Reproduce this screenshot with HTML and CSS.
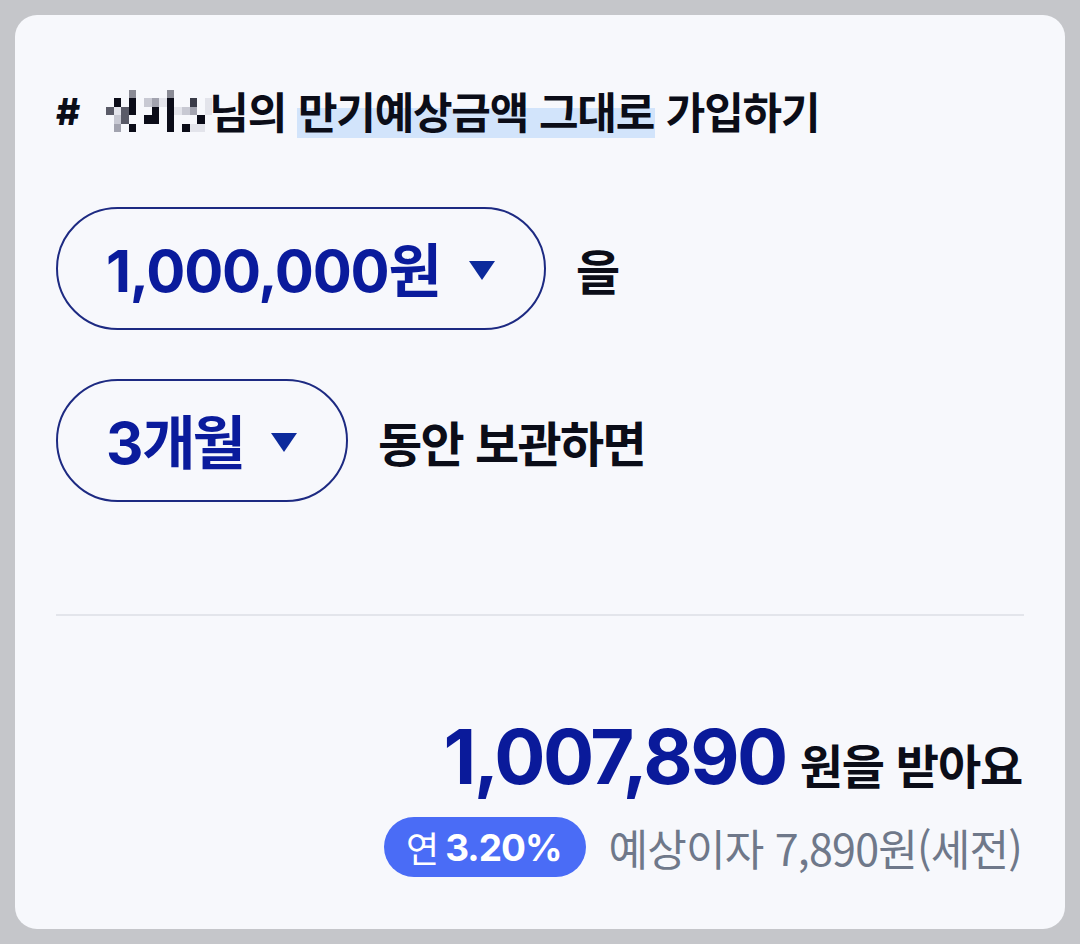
FILE: index.html
```html
<!DOCTYPE html>
<html lang="ko">
<head>
<meta charset="utf-8">
<link rel="stylesheet" href="styles.css">
</head>
<body>
<div class="card">
  <div class="headline">
    <span class="hash">#</span>
    <span class="mosaic" aria-hidden="true">
      <i></i><i></i><i></i><i class="g3"></i><i></i><i></i><i></i><i></i><i class="g3"></i><i></i><i></i><i></i><i></i><i></i>
      <i></i><i class="d"></i><i></i><i class="d"></i><i></i><i class="l1"></i><i class="g2"></i><i class="l2"></i><i class="d"></i><i></i><i></i><i class="d2"></i><i></i><i class="l2"></i>
      <i class="g4"></i><i class="l2"></i><i class="g4"></i><i class="d"></i><i></i><i></i><i class="d"></i><i></i><i class="d"></i><i class="l2"></i><i class="l1"></i><i class="g2"></i><i></i><i class="l2"></i>
      <i></i><i class="l1"></i><i class="g4"></i><i></i><i></i><i class="d"></i><i class="d"></i><i></i><i class="d"></i><i></i><i></i><i></i><i class="d"></i><i></i>
      <i></i><i class="g2"></i><i></i><i class="d"></i><i></i><i></i><i></i><i></i><i class="d"></i><i></i><i class="d"></i><i class="l2"></i><i class="l2"></i><i></i>
    </span>
    <span class="ht">님의 <mark class="hl">만기예상금액 그대로</mark> 가입하기</span>
  </div>

  <div class="row row-first">
    <button class="pill" type="button">
      <span class="pill-text"><span class="num">1,000,000</span>원</span>
      <span class="tri"></span>
    </button>
    <span class="after">을</span>
  </div>

  <div class="row">
    <button class="pill" type="button">
      <span class="pill-text"><span class="num">3</span><span class="kr">개월</span></span>
      <span class="tri"></span>
    </button>
    <span class="after">동안 보관하면</span>
  </div>

  <hr class="divider">

  <div class="result">
    <div class="total"><span class="big">1,007,890</span><span class="suffix">원을 받아요</span></div>
    <div class="sub">
      <span class="badge"><span class="yr">연</span><span class="rate">3.20%</span></span>
      <span class="interest">예상이자 7,890원(세전)</span>
    </div>
  </div>
</div>
</body>
</html>
```

FILE: styles.css
```css
* { box-sizing: border-box; }

html, body {
  margin: 0;
  padding: 0;
  background: #c5c6ca;
}

body {
  width: 1080px;
  height: 944px;
  padding: 15px;
  font-family: "Noto Sans CJK KR", "Noto Sans", sans-serif;
  color: #0b0d18;
}

.card {
  width: 1050px;
  height: 914px;
  background: #f7f8fc;
  border-radius: 22px;
  padding: 0 41px;
  display: flex;
  flex-direction: column;
}

.headline {
  margin-top: 60px;
  height: 70px;
  display: flex;
  align-items: center;
  font-size: 43px;
  font-weight: 700;
  letter-spacing: -1.2px;
}

.hash {
  font-family: "Inter", "Noto Sans", sans-serif;
  font-size: 37px;
  font-weight: 800;
  margin-right: 27px;
  margin-top: 2px;
}

.mosaic {
  display: grid;
  grid-template-columns: repeat(14, 7.6px);
  grid-template-rows: repeat(5, 8.4px);
  margin-top: 2px;
  margin-right: -3px;
}

.mosaic i { display: block; }
.mosaic i.d { background: #0b0c18; }
.mosaic i.d2 { background: #3a3b48; }
.mosaic i.g2 { background: #a2a3af; }
.mosaic i.g3 { background: #8a8b95; }
.mosaic i.g4 { background: #5a5b68; }
.mosaic i.l1 { background: #c8c9d3; }
.mosaic i.l2 { background: #e3e4eb; }

.ht { white-space: nowrap; }

.hl {
  color: inherit;
  background: linear-gradient(to bottom, transparent 47%, #d2e4fb 47%, #d2e4fb 95%, transparent 95%);
  padding: 0 1px;
}

.row {
  display: flex;
  align-items: center;
  margin-top: 49px;
}

.row-first { margin-top: 62px; }

.pill {
  height: 123px;
  border: 2px solid #1d2a82;
  border-radius: 62px;
  background: transparent;
  display: flex;
  align-items: center;
  padding: 0 49px 0 48px;
  font: inherit;
  cursor: pointer;
}

.pill-text {
  color: #0a1b9c;
  font-size: 58px;
  font-weight: 700;
  letter-spacing: -1px;
  line-height: 1;
}

.pill-text .num {
  font-family: "Inter", "Noto Sans", sans-serif;
  letter-spacing: -1.2px;
}

.pill-text .kr {
  letter-spacing: -3px;
}

.tri {
  width: 0;
  height: 0;
  margin-left: 28px;
  border-left: 13px solid transparent;
  border-right: 13px solid transparent;
  border-top: 19px solid #0c2a9c;
  margin-top: 4px;
}

.after {
  margin-left: 30px;
  font-size: 48px;
  font-weight: 700;
  letter-spacing: -1.6px;
  color: #0b0d18;
}

.divider {
  border: 0;
  height: 2px;
  background: #e3e5eb;
  margin: 112px 0 0;
  width: 100%;
}

.result {
  margin-top: 102px;
  display: flex;
  flex-direction: column;
  align-items: flex-end;
  padding-right: 2px;
}

.total {
  display: flex;
  align-items: baseline;
  line-height: 1;
}

.big {
  font-family: "Inter", "Noto Sans", sans-serif;
  font-size: 76px;
  font-weight: 700;
  letter-spacing: -2.5px;
  color: #0a1a9a;
}

.suffix {
  margin-left: 14px;
  font-size: 47px;
  font-weight: 700;
  letter-spacing: -1.2px;
  color: #0b0d18;
}

.sub {
  display: flex;
  align-items: center;
  margin-top: 22px;
}

.badge {
  height: 60px;
  border-radius: 30px;
  background: #4a6cf6;
  color: #ffffff;
  display: flex;
  align-items: center;
  padding: 0 24px 0 22px;
}

.yr {
  font-size: 36px;
  font-weight: 400;
  margin-right: 6px;
}

.rate {
  font-family: "Inter", "Noto Sans", sans-serif;
  font-size: 37px;
  font-weight: 700;
  letter-spacing: -1px;
}

.interest {
  margin-left: 23px;
  font-size: 43px;
  font-weight: 400;
  color: #6f788a;
  letter-spacing: -0.8px;
}
```
